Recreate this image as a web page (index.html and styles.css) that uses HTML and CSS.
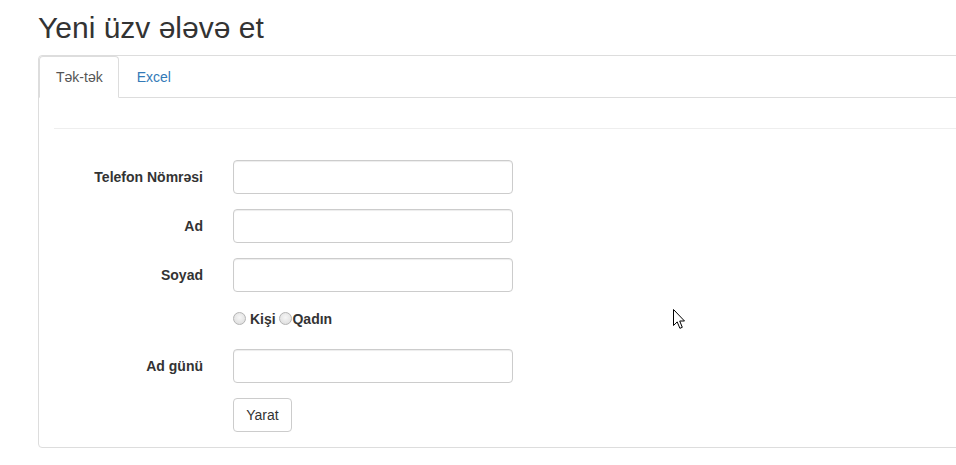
FILE: index.html
```html
<!DOCTYPE html>
<html lang="az">
<head>
<meta charset="utf-8">
<title>Yeni üzv ələvə et</title>
<link rel="stylesheet" href="styles.css">
</head>
<body>
<div class="page">
  <h2 class="title">Yeni üzv ələvə et</h2>
  <div class="panel">
    <ul class="tabs">
      <li class="tab active"><a href="#">Tək-tək</a></li>
      <li class="tab"><a href="#">Excel</a></li>
    </ul>
    <div class="pane">
      <hr class="sep">
      <form class="form">
        <div class="row">
          <label class="lbl">Telefon Nömrəsi</label>
          <input class="field" type="text">
        </div>
        <div class="row">
          <label class="lbl">Ad</label>
          <input class="field" type="text">
        </div>
        <div class="row">
          <label class="lbl">Soyad</label>
          <input class="field" type="text">
        </div>
        <div class="row radio-row">
          <span class="lbl"></span>
          <div class="radios"><input class="radio" type="radio" name="g"> <b>Kişi</b> <input class="radio" type="radio" name="g"><b>Qadın</b></div>
        </div>
        <div class="row">
          <label class="lbl">Ad günü</label>
          <input class="field" type="text">
        </div>
        <div class="row">
          <span class="lbl"></span>
          <button class="btn" type="button">Yarat</button>
        </div>
      </form>
    </div>
  </div>
</div>
<svg class="cursor" width="13" height="21" viewBox="0 0 13 21"><path d="M0.5 0.5 L0.5 16.5 L4.2 12.9 L6.9 19.3 L9.3 18.3 L6.7 12 L11.5 12 Z" fill="#fff" stroke="#000" stroke-width="1" stroke-linejoin="miter"/></svg>
</body>
</html>
```
FILE: styles.css
```css
html, body {
  margin: 0;
  padding: 0;
  overflow: hidden;
  background: #fff;
}
body {
  font-family: "Liberation Sans", Arial, Helvetica, sans-serif;
  font-size: 14px;
  line-height: 20px;
  color: #333;
  width: 956px;
  height: 465px;
  position: relative;
}
.page {
  padding-left: 38px;
}
.title {
  font-size: 30px;
  font-weight: normal;
  line-height: 33px;
  margin: 11px 0 11px 0;
  color: #333;
}
.panel {
  width: 960px;
  border: 1px solid #ddd;
  border-radius: 4px;
  padding-bottom: 0;
}
.tabs {
  list-style: none;
  margin: 0;
  padding: 0;
  display: flex;
  border-bottom: 1px solid #ddd;
}
.tab {
  margin-bottom: -1px;
  margin-right: 2px;
}
.tab a {
  display: block;
  padding: 10px 15px;
  line-height: 20px;
  border: 1px solid transparent;
  border-radius: 4px 4px 0 0;
  color: #337ab7;
  text-decoration: none;
}
.tab.active a {
  padding-left: 16px;
  color: #555;
  background: #fff;
  border-color: #ddd #ddd transparent #ddd;
}
.pane {
  padding: 0 0 0 15px;
}
.sep {
  margin: 30px 0 31px 0;
  border: 0;
  border-top: 1px solid #eee;
  height: 0;
}
.form {
  margin-left: -15px;
}
.row {
  display: flex;
  margin-bottom: 15px;
}
.lbl {
  width: 164px;
  margin-right: 30px;
  text-align: right;
  font-weight: bold;
  padding-top: 7px;
  line-height: 20px;
  flex: none;
}
.field {
  width: 280px;
  height: 34px;
  box-sizing: border-box;
  margin: 0;
  padding: 6px 12px;
  border: 1px solid #ccc;
  border-radius: 4px;
  box-shadow: inset 0 1px 1px rgba(0,0,0,0.075);
  font: 14px "Liberation Sans", Arial, sans-serif;
  background: #fff;
}
.radio-row {
  height: 27px;
}
.radio-row .lbl {
  padding-top: 0;
}
.radios {
  padding-top: 2px;
  line-height: 20px;
  font-size: 14px;
}
.radio {
  appearance: none;
  -webkit-appearance: none;
  width: 13px;
  height: 13px;
  margin: 0;
  border: 1px solid #b4b4b4;
  border-radius: 50%;
  box-sizing: border-box;
  background: radial-gradient(circle at 50% 40%, #f6f6f6 0%, #e2e2e2 70%, #d8d8d8 100%);
  vertical-align: -1px;
}
.btn {
  height: 34px;
  min-width: 59px;
  box-sizing: border-box;
  padding: 6px 12px;
  border: 1px solid #ccc;
  border-radius: 4px;
  background: #fff;
  color: #333;
  font: 14px/20px "Liberation Sans", Arial, sans-serif;
  margin: 0;
}
.cursor {
  position: absolute;
  left: 673px;
  top: 309px;
}
```
